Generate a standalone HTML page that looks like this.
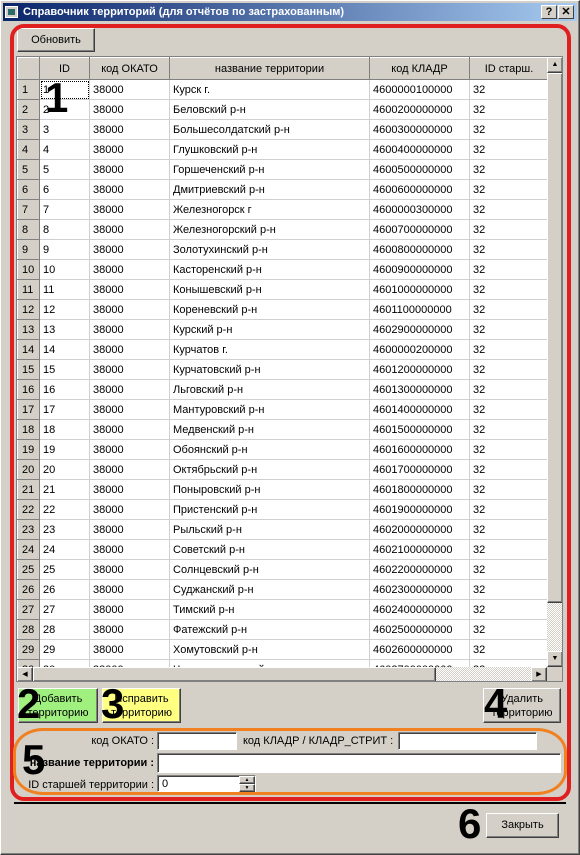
<!DOCTYPE html>
<html><head><meta charset="utf-8"><style>
*{box-sizing:border-box;margin:0;padding:0}
body{width:580px;height:855px;background:#d4d0c8;font:11px "Liberation Sans","DejaVu Sans",sans-serif;color:#000;position:relative;overflow:hidden}
.a{position:absolute}
.frame{left:0;top:0;width:580px;height:855px;border:1px solid #fff;border-right-color:#404040;border-bottom-color:#404040;box-shadow:inset -1px -1px #808080}
.title{left:3px;top:3px;width:574px;height:18px;background:linear-gradient(90deg,#0a246a,#a6caf0);color:#fff;font-weight:bold;font-size:11px;line-height:18px;padding-left:20px}
.tb{top:5px;width:16px;height:14px;background:#d4d0c8;border:1px solid #fff;border-right-color:#404040;border-bottom-color:#404040;font:bold 11px "Liberation Sans",sans-serif;text-align:center;line-height:12px;color:#000}
.btn{background:#d4d0c8;border:1px solid #fff;border-right-color:#404040;border-bottom-color:#404040;box-shadow:inset -1px -1px #808080;text-align:center}
.tbl{left:16px;top:56px;width:547px;height:626px;border:1px solid #808080;background:#fff;overflow:hidden}
table{border-collapse:collapse;position:absolute;left:0;top:0;table-layout:fixed}
td,th{height:20px;border-right:1px solid #d0d0d0;border-bottom:1px solid #d0d0d0;padding:0 3px;white-space:nowrap;overflow:hidden;font-weight:normal;text-align:left}
th{background:#d4d0c8;text-align:center;border:1px solid #fff;border-right-color:#808080;border-bottom-color:#808080;height:22px}
td.h{background:#d4d0c8;border:1px solid #fff;border-right-color:#808080;border-bottom-color:#808080;text-align:left;padding-left:4px}
.num{font:900 42px "Liberation Sans",sans-serif;color:#000;line-height:40px}
.inp{background:#fff;border:1px solid #808080;border-right-color:#fff;border-bottom-color:#fff;box-shadow:inset 1px 1px #404040}
.lbl{text-align:right}
</style></head><body>
<div class="a frame"></div>
<div class="a title">Справочник территорий (для отчётов по застрахованным)</div>
<div class="a" style="left:5px;top:6px;width:13px;height:12px;background:#d4d0c8;border:1px solid #fff"><div style="margin:2px;width:7px;height:6px;background:#2a6a6a"></div></div>
<div class="a tb" style="left:541px">?</div>
<div class="a tb" style="left:558px">✕</div>

<div class="a btn" style="left:17px;top:28px;width:78px;height:24px;line-height:22px">Обновить</div>

<div class="a tbl">
<table>
<colgroup><col style="width:22px"><col style="width:50px"><col style="width:80px"><col style="width:200px"><col style="width:100px"><col style="width:79px"></colgroup>
<tr><th></th><th>ID</th><th>код ОКАТО</th><th>название территории</th><th>код КЛАДР</th><th>ID старш.</th></tr>
<tr><td class="h">1</td><td style="outline:1px dotted #000;outline-offset:-2px">1</td><td>38000</td><td>Курск г.</td><td>4600000100000</td><td>32</td></tr>
<tr><td class="h">2</td><td>2</td><td>38000</td><td>Беловский р-н</td><td>4600200000000</td><td>32</td></tr>
<tr><td class="h">3</td><td>3</td><td>38000</td><td>Большесолдатский р-н</td><td>4600300000000</td><td>32</td></tr>
<tr><td class="h">4</td><td>4</td><td>38000</td><td>Глушковский р-н</td><td>4600400000000</td><td>32</td></tr>
<tr><td class="h">5</td><td>5</td><td>38000</td><td>Горшеченский р-н</td><td>4600500000000</td><td>32</td></tr>
<tr><td class="h">6</td><td>6</td><td>38000</td><td>Дмитриевский р-н</td><td>4600600000000</td><td>32</td></tr>
<tr><td class="h">7</td><td>7</td><td>38000</td><td>Железногорск г</td><td>4600000300000</td><td>32</td></tr>
<tr><td class="h">8</td><td>8</td><td>38000</td><td>Железногорский р-н</td><td>4600700000000</td><td>32</td></tr>
<tr><td class="h">9</td><td>9</td><td>38000</td><td>Золотухинский р-н</td><td>4600800000000</td><td>32</td></tr>
<tr><td class="h">10</td><td>10</td><td>38000</td><td>Касторенский р-н</td><td>4600900000000</td><td>32</td></tr>
<tr><td class="h">11</td><td>11</td><td>38000</td><td>Конышевский р-н</td><td>4601000000000</td><td>32</td></tr>
<tr><td class="h">12</td><td>12</td><td>38000</td><td>Кореневский р-н</td><td>4601100000000</td><td>32</td></tr>
<tr><td class="h">13</td><td>13</td><td>38000</td><td>Курский р-н</td><td>4602900000000</td><td>32</td></tr>
<tr><td class="h">14</td><td>14</td><td>38000</td><td>Курчатов г.</td><td>4600000200000</td><td>32</td></tr>
<tr><td class="h">15</td><td>15</td><td>38000</td><td>Курчатовский р-н</td><td>4601200000000</td><td>32</td></tr>
<tr><td class="h">16</td><td>16</td><td>38000</td><td>Льговский р-н</td><td>4601300000000</td><td>32</td></tr>
<tr><td class="h">17</td><td>17</td><td>38000</td><td>Мантуровский р-н</td><td>4601400000000</td><td>32</td></tr>
<tr><td class="h">18</td><td>18</td><td>38000</td><td>Медвенский р-н</td><td>4601500000000</td><td>32</td></tr>
<tr><td class="h">19</td><td>19</td><td>38000</td><td>Обоянский р-н</td><td>4601600000000</td><td>32</td></tr>
<tr><td class="h">20</td><td>20</td><td>38000</td><td>Октябрьский р-н</td><td>4601700000000</td><td>32</td></tr>
<tr><td class="h">21</td><td>21</td><td>38000</td><td>Поныровский р-н</td><td>4601800000000</td><td>32</td></tr>
<tr><td class="h">22</td><td>22</td><td>38000</td><td>Пристенский р-н</td><td>4601900000000</td><td>32</td></tr>
<tr><td class="h">23</td><td>23</td><td>38000</td><td>Рыльский р-н</td><td>4602000000000</td><td>32</td></tr>
<tr><td class="h">24</td><td>24</td><td>38000</td><td>Советский р-н</td><td>4602100000000</td><td>32</td></tr>
<tr><td class="h">25</td><td>25</td><td>38000</td><td>Солнцевский р-н</td><td>4602200000000</td><td>32</td></tr>
<tr><td class="h">26</td><td>26</td><td>38000</td><td>Суджанский р-н</td><td>4602300000000</td><td>32</td></tr>
<tr><td class="h">27</td><td>27</td><td>38000</td><td>Тимский р-н</td><td>4602400000000</td><td>32</td></tr>
<tr><td class="h">28</td><td>28</td><td>38000</td><td>Фатежский р-н</td><td>4602500000000</td><td>32</td></tr>
<tr><td class="h">29</td><td>29</td><td>38000</td><td>Хомутовский р-н</td><td>4602600000000</td><td>32</td></tr>
<tr><td class="h">30</td><td>30</td><td>38000</td><td>Черемисиновский р-н</td><td>4602700000000</td><td>32</td></tr>
</table>
<div class="a" style="left:530px;top:0;width:16px;height:610px;background-image:repeating-conic-gradient(#d4d0c8 0 25%,#fff 0 50%);background-size:2px 2px"></div>
<div class="a btn" style="left:530px;top:0;width:16px;height:16px;font-size:7px;line-height:14px">▲</div>
<div class="a btn" style="left:530px;top:16px;width:16px;height:530px"></div>
<div class="a btn" style="left:530px;top:594px;width:16px;height:16px;font-size:7px;line-height:14px">▼</div>
<div class="a" style="left:0;top:610px;width:530px;height:16px;background-image:repeating-conic-gradient(#d4d0c8 0 25%,#fff 0 50%);background-size:2px 2px"></div>
<div class="a btn" style="left:0;top:610px;width:16px;height:15px;font-size:7px;line-height:13px">◀</div>
<div class="a btn" style="left:16px;top:610px;width:403px;height:15px"></div>
<div class="a btn" style="left:514px;top:610px;width:16px;height:15px;font-size:7px;line-height:13px">▶</div>
<div class="a" style="left:530px;top:610px;width:16px;height:16px;background:#d4d0c8"></div>
</div>

<div class="a btn" style="left:18px;top:688px;width:80px;height:35px;background:#a0f080;line-height:14px;padding-top:3px">Добавить<br>территорию</div>
<div class="a btn" style="left:102px;top:688px;width:79px;height:35px;background:#ffff80;line-height:14px;padding-top:3px">Исправить<br>территорию</div>
<div class="a btn" style="left:483px;top:688px;width:78px;height:35px;line-height:14px;padding-top:3px">Удалить<br>территорию</div>

<div class="a lbl" style="left:20px;top:735px;width:134px">код ОКАТО :</div>
<div class="a inp" style="left:157px;top:732px;width:80px;height:18px"></div>
<div class="a" style="left:243px;top:735px">код КЛАДР / КЛАДР_СТРИТ :</div>
<div class="a inp" style="left:398px;top:732px;width:139px;height:18px"></div>
<div class="a lbl" style="left:20px;top:757px;width:134px;font-weight:bold">название территории :</div>
<div class="a inp" style="left:157px;top:753px;width:404px;height:20px"></div>
<div class="a lbl" style="left:10px;top:779px;width:144px">ID старшей территории :</div>
<div class="a inp" style="left:157px;top:775px;width:99px;height:17px;padding:2px 4px">0</div>
<div class="a btn" style="left:239px;top:776px;width:16px;height:8px;font-size:5px;line-height:6px">▲</div>
<div class="a btn" style="left:239px;top:784px;width:16px;height:8px;font-size:5px;line-height:6px">▼</div>

<div class="a" style="left:14px;top:802px;width:552px;height:2px;background:#000"></div>
<div class="a btn" style="left:486px;top:813px;width:73px;height:25px;line-height:23px">Закрыть</div>

<div class="a" style="left:10px;top:24px;width:561px;height:777px;border:4px solid #e02020;border-radius:14px"></div>
<div class="a" style="left:13px;top:728px;width:554px;height:67px;border:3px solid #f08020;border-radius:30px/24px"></div>
<div class="a num" style="left:45px;top:78px">1</div>
<div class="a num" style="left:17px;top:684px">2</div>
<div class="a num" style="left:101px;top:684px">3</div>
<div class="a num" style="left:484px;top:684px">4</div>
<div class="a num" style="left:22px;top:740px">5</div>
<div class="a num" style="left:458px;top:804px">6</div>
</body></html>
